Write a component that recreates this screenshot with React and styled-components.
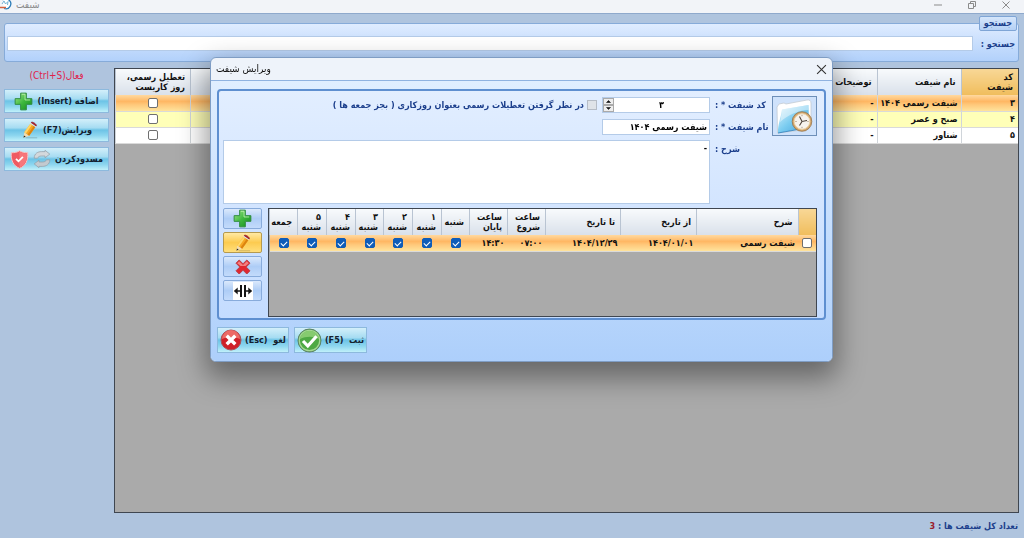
import { useState } from "react";
import styled, { createGlobalStyle } from "styled-components";

const shifts = [
  { code: "۳", name: "شیفت رسمی ۱۴۰۴", note: "-" },
  { code: "۴", name: "صبح و عصر", note: "-" },
  { code: "۵", name: "شناور", note: "-" },
];

const days = [
  ["", "شنبه"],
  ["۱", "شنبه"],
  ["۲", "شنبه"],
  ["۳", "شنبه"],
  ["۴", "شنبه"],
  ["۵", "شنبه"],
  ["", "جمعه"],
];

const PlusIcon = ({ size }) => (
  <svg width={size} height={size} viewBox="0 0 20 20" aria-hidden="true">
    <defs>
      <linearGradient id="plus" x1="0" y1="0" x2="1" y2="1">
        <stop offset="0" stopColor="#a5ea8c" />
        <stop offset="0.5" stopColor="#3fb83f" />
        <stop offset="1" stopColor="#128a1c" />
      </linearGradient>
    </defs>
    <path
      d="M7 1.2h6v5.8h5.8v6h-5.8v5.8H7v-5.800H1.200V7H7z"
      fill="url(#plus)"
      stroke="#2d8a3c"
      strokeLinejoin="round"
    />
    <path d="M8.2 2.400h3.400v6H17" fill="none" stroke="#c9f5b8" strokeWidth="0.8" />
  </svg>
);

const PencilIcon = ({ size }) => (
  <svg width={size} height={size} viewBox="0 0 20 20" aria-hidden="true">
    <path d="M5 18.6h13" stroke="#00000026" strokeWidth="1.4" />
    <path d="M2.800 18.600l.9-6 5.400 3.800z" fill="#f3dcb0" />
    <path d="M2.800 18.600l.4-2.600 2 1.300z" fill="#222" />
    <path d="M3.700 12.600L10.400 3l5.600 3.800-6.900 9.600z" fill="#f7a823" />
    <path d="M3.700 12.600L10.400 3l1.900 1.300L5.500 13.900z" fill="#ffd768" />
    <path d="M7.300 15.100L14.100 5.500 16 6.800l-6.900 9.600z" fill="#dc8410" />
    <path d="M10.400 3l.9-1.300 5.600 3.800-.9 1.300z" fill="#d9dde3" />
    <path d="M11.300 1.700c1-1.600 6.800 2 5.600 3.800z" fill="#b51f2c" stroke="#8c1420" strokeWidth="0.800" />
  </svg>
);

const SyncIcon = () => (
  <svg width="18" height="18" viewBox="0 0 18 18" aria-hidden="true">
    <path
      d="M1.200 8.200C1.200 3.500 5 1.600 8.500 1.600H12V.3l4.800 3.800L12 7.800V6H8.500C6.300 6 5.200 6.700 4.600 8.200z"
      fill="#d3d8dc"
      stroke="#8f9da8"
      strokeWidth="0.700"
    />
    <path
      d="M16.800 9.800c0 4.700-3.800 6.600-7.300 6.600H6v1.300L1.200 13.900 6 10.200V12h3.500c2.200 0 3.300-.7 3.900-2.200z"
      fill="#c3cad0"
      stroke="#8f9da8"
      strokeWidth="0.700"
    />
  </svg>
);

const ShieldIcon = () => (
  <svg width="19" height="19" viewBox="0 0 19 19" aria-hidden="true">
    <path
      d="M9.500.8c2.400 1.500 5 2 8.200 1.900.5 7.200-1.600 13-8.200 15.600C2.900 15.700.8 9.900 1.300 2.700 4.500 2.800 7.100 2.300 9.500.8z"
      fill="#ef5a62"
      stroke="#f6c3c4"
    />
    <path d="M9.500 1.500c2.400 1.400 4.700 1.900 7.500 1.800.3 6.800-1.500 11.700-7.500 14.200z" fill="#f7777b" />
    <path d="M6 8.800l2.500 2.500 4.400-4.400" fill="none" stroke="#fff" strokeWidth="1.800" />
  </svg>
);

const OkIcon = () => (
  <svg width="25" height="25" viewBox="0 0 25 25" aria-hidden="true">
    <circle cx="12.500" cy="12.500" r="11.500" fill="#4ea944" stroke="#5d7f69" strokeWidth="1" />
    <circle cx="12.500" cy="12.500" r="10.200" fill="none" stroke="#a5d795" strokeWidth="1.200" />
    <path d="M3 11a9.600 9.600 0 0 1 19 0c-5-3-13-3-19 0z" fill="#86cb70" />
    <path d="M6 13l4.800 5L19.500 8.300" fill="none" stroke="#fff" strokeWidth="3.200" />
  </svg>
);

const CancelIcon = () => (
  <svg width="22" height="22" viewBox="0 0 22 22" aria-hidden="true">
    <circle cx="11" cy="11" r="10" fill="#cf2028" stroke="#a6555c" />
    <path d="M2 10a9 9 0 0 1 18 0c-5-2.500-13-2.500-18 0z" fill="#ec6a66" />
    <path d="M6.700 6.700l8.600 8.600M15.300 6.700l-8.600 8.600" stroke="#fff" strokeWidth="3.400" />
  </svg>
);

const DeleteIcon = () => (
  <svg width="16" height="16" viewBox="0 0 16 16" aria-hidden="true">
    <path
      d="M4.200 1L8 4.800 11.800 1 15 4.200 11.200 8l3.800 3.800-3.200 3.200L8 11.200 4.200 15 1 11.800 4.800 8 1 4.200z"
      fill="#e02730"
      stroke="#b8434b"
      strokeLinejoin="round"
    />
    <path d="M4.200 2.200L8 6l3.800-3.800 2 2L10.500 7h-5L2.200 4.200z" fill="#f37f80" />
  </svg>
);

const SplitIcon = () => (
  <svg width="20" height="18" viewBox="0 0 20 18" aria-hidden="true">
    <path fill="#fff" d="M0 0h20v18H0z" />
    <path d="M8 3v12M12 3v12" stroke="#151515" strokeWidth="2" />
    <path d="M2 9h6M12 9h6" stroke="#151515" strokeWidth="1.600" />
    <path d="M4.700 5.500L.8 9l3.900 3.500zM15.300 5.500L19.200 9l-3.900 3.500z" fill="#151515" />
  </svg>
);

const FolderClockIcon = () => (
  <svg width="41" height="37" viewBox="0 0 41 37" aria-hidden="true">
    <defs>
      <linearGradient id="folder" x1="0" y1="0" x2="1" y2="1">
        <stop offset="0" stopColor="#e2f5fd" />
        <stop offset="0.5" stopColor="#7accf0" />
        <stop offset="1" stopColor="#3f9bd8" />
      </linearGradient>
    </defs>
    <path
      d="M3 9l2-3 5-1 2 1L33 2c2.500-.4 4 .6 4 3v18l-8 9-25.500 3z"
      fill="#fff"
      stroke="#c4cbd3"
      strokeWidth="0.8"
    />
    <path d="M8 11.500L34.500 7 35 25l-8 6-23 4c-.4-8 2.800-15 4-23.500z" fill="url(#folder)" />
    <path d="M8 11.500L34.500 7v5C24 12.500 14 17 6 24c1-4 1.500-8 2-12.500z" fill="#ffffff70" />
    <path d="M4 35l23-4" stroke="#2f7dbb" strokeWidth="0.8" />
    <circle cx="28" cy="23.500" r="9.800" fill="#d2a56b" stroke="#8e6a3d" strokeWidth="0.7" />
    <circle cx="28" cy="23.500" r="7.800" fill="#f6f3ee" stroke="#ecd6ac" />
    <path d="M25.500 18.500l2.500 5 5-1M28 23.500l-2.500 4" fill="none" stroke="#4a4038" strokeWidth="1.100" />
    <path d="M28 16.800v1.400M28 28.800v1.400M21.300 23.500h1.400M33.300 23.500h1.400" stroke="#a08c74" strokeWidth="0.8" />
  </svg>
);

const AppIcon = () => (
  <svg width="12" height="12" viewBox="0 0 12 12" aria-hidden="true">
    <path d="M2.500 1A5 5 0 1 1 4 9.500" fill="#fff" stroke="#2e7db8" strokeWidth="1.300" />
    <path d="M2 5l2-3 1.500 3L8 2.500 7.500 6" fill="none" stroke="#67a9cf" strokeWidth="0.900" />
    <path d="M0 8.500h6" stroke="#d5603c" strokeWidth="1.500" />
  </svg>
);

const Glyph = ({ size, d }) => (
  <svg width={size} height={size} viewBox="0 0 10 10" fill="none" stroke="currentColor" aria-hidden="true">
    <path d={d} />
  </svg>
);

const App = () => {
  const [search, setSearch] = useState("");
  const [code, setCode] = useState("۳");
  const [name, setName] = useState("شیفت رسمی ۱۴۰۴");
  const [note, setNote] = useState("-");

  return (
    <Page dir="rtl">
      <GlobalStyle />
      <TitleBar dir="ltr">
        <AppIcon />
        <WindowTitle>شیفت</WindowTitle>
        <WindowButton aria-label="Minimize">
          <Glyph size={10} d="M1 5h8" />
        </WindowButton>
        <WindowButton aria-label="Restore">
          <Glyph size={10} d="M1.500 3.500h5v5h-5zM3.500 3.500v-2h5v5h-2" />
        </WindowButton>
        <WindowButton aria-label="Close window">
          <Glyph size={10} d="M1.500 1.500l7 7M8.500 1.500l-7 7" />
        </WindowButton>
      </TitleBar>

      <SearchBox>
        <legend>جستجو</legend>
        <SearchRow>
          <label htmlFor="search">جستجو :</label>
          <TextInput id="search" value={search} onChange={(e) => setSearch(e.target.value)} />
        </SearchRow>
      </SearchBox>

      <Main>
        <GridFrame>
          <Table>
            <colgroup>
              <Col $w={57} />
              <Col $w={84} />
              <Col $w={50} />
              <col />
              <Col $w={75} />
            </colgroup>
            <thead>
              <tr>
                <Th $active>
                  کد
                  <br />
                  شیفت
                </Th>
                <Th>نام شیفت</Th>
                <Th>توضیحات</Th>
                <Th />
                <Th>
                  تعطیل رسمی،
                  <br />
                  روز کاریست
                </Th>
              </tr>
            </thead>
            <tbody>
              {shifts.map((shift, i) => (
                <Row key={shift.code} $tone={["selected", "alt", "plain"][i]}>
                  <td>{shift.code}</td>
                  <td>{shift.name}</td>
                  <td>{shift.note}</td>
                  <td />
                  <CheckCell>
                    <Check type="checkbox" aria-label={shift.name} />
                  </CheckCell>
                </Row>
              ))}
            </tbody>
          </Table>
        </GridFrame>
        <Sidebar>
          <Status>فعال(Ctrl+S)</Status>
          <ActionButton>
            اضافه (Insert)
            <PlusIcon size={19} />
          </ActionButton>
          <ActionButton>
            ویرایش(F7)
            <PencilIcon size={18} />
          </ActionButton>
          <ActionButton>
            مسدودکردن
            <SyncIcon />
            <ShieldIcon />
          </ActionButton>
        </Sidebar>
      </Main>

      <Footer>
        تعداد کل شیفت ها : <Count>3</Count>
      </Footer>

      <Overlay>
        <Dialog role="dialog" aria-labelledby="dialog-title">
          <DialogBar>
            <CloseButton aria-label="Close">
              <Glyph size={11} d="M1 1l8 8M9 1l-8 8" />
            </CloseButton>
            <DialogTitle id="dialog-title">ویرایش شیفت</DialogTitle>
          </DialogBar>
          <DialogBody>
            <Panel>
              <Form>
                <IconFrame>
                  <FolderClockIcon />
                </IconFrame>
                <FieldLabel htmlFor="code">کد شیفت * :</FieldLabel>
                <FieldRow>
                  <Spinner>
                    <input id="code" value={code} onChange={(e) => setCode(e.target.value)} />
                    <SpinButtons>
                      <button aria-label="Increase">
                        <Glyph size={5} d="M1 7l4-4 4 4z" />
                      </button>
                      <button aria-label="Decrease">
                        <Glyph size={5} d="M1 3l4 4 4-4z" />
                      </button>
                    </SpinButtons>
                  </Spinner>
                  <HolidayLabel>
                    <FlatCheck type="checkbox" disabled />
                    در نظر گرفتن تعطیلات رسمی بعنوان روزکاری ( بجز جمعه ها )
                  </HolidayLabel>
                </FieldRow>
                <FieldLabel htmlFor="name">نام شیفت * :</FieldLabel>
                <FieldRow>
                  <NameInput id="name" value={name} onChange={(e) => setName(e.target.value)} />
                </FieldRow>
                <FieldLabel htmlFor="note">شرح :</FieldLabel>
                <Note id="note" value={note} onChange={(e) => setNote(e.target.value)} />
              </Form>
              <Details>
                <GridFrame>
                  <Table>
                    <colgroup>
                      <Col $w={18} />
                      <col />
                      <Col $w={76} />
                      <Col $w={75} />
                      <Col $w={38} />
                      <Col $w={38} />
                      {days.map((day, i) => (
                        <Col key={i} $w={i % 3 ? 29 : 28} />
                      ))}
                    </colgroup>
                    <thead>
                      <tr>
                        <Th $active />
                        <Th>شرح</Th>
                        <Th>از تاریخ</Th>
                        <Th>تا تاریخ</Th>
                        <Th>
                          ساعت
                          <br />
                          شروع
                        </Th>
                        <Th>
                          ساعت
                          <br />
                          پایان
                        </Th>
                        {days.map(([num, label], i) => (
                          <Th key={i}>
                            {num}
                            {num && <br />}
                            {label}
                          </Th>
                        ))}
                      </tr>
                    </thead>
                    <tbody>
                      <Row $tone="selected" $merged>
                        <CheckCell>
                          <Check type="checkbox" aria-label="شیفت رسمی" />
                        </CheckCell>
                        <td>شیفت رسمی</td>
                        <td>۱۴۰۴/۰۱/۰۱</td>
                        <td>۱۴۰۴/۱۲/۲۹</td>
                        <td>۰۷:۰۰</td>
                        <td>۱۴:۳۰</td>
                        {days.map(([num, label], i) => (
                          <CheckCell key={i}>
                            <Check type="checkbox" defaultChecked aria-label={`${num} ${label}`} />
                          </CheckCell>
                        ))}
                      </Row>
                    </tbody>
                  </Table>
                </GridFrame>
                <Tools>
                  <ToolButton aria-label="Add">
                    <PlusIcon size={19} />
                  </ToolButton>
                  <ToolButton $active aria-label="Edit">
                    <PencilIcon size={18} />
                  </ToolButton>
                  <ToolButton aria-label="Delete">
                    <DeleteIcon />
                  </ToolButton>
                  <ToolButton aria-label="Split">
                    <SplitIcon />
                  </ToolButton>
                </Tools>
              </Details>
            </Panel>
            <DialogActions>
              <DialogButton>
                ثبت &nbsp;(F5)
                <OkIcon />
              </DialogButton>
              <DialogButton>
                لغو &nbsp;(Esc)
                <CancelIcon />
              </DialogButton>
            </DialogActions>
          </DialogBody>
        </Dialog>
      </Overlay>
    </Page>
  );
};

const GlobalStyle = createGlobalStyle`
  * {
    box-sizing: border-box;
  }
  body {
    margin: 0;
  }
  body, button, input, textarea {
    font-family: "DejaVu Sans Condensed", "DejaVu Sans", sans-serif;
    font-size: 9px;
    font-weight: bold;
    line-height: 10px;
  }
  button {
    padding: 0;
    cursor: pointer;
  }
`;
const Page = styled.div`
  display: flex;
  flex-direction: column;
  min-height: 100vh;
  background: #afc4de;
  color: #111;
`;
const TitleBar = styled.header`
  display: flex;
  align-items: center;
  height: 14px;
  padding-right: 7px;
  padding-bottom: 4px;
  background: #f2f4f8;
  border-bottom: 1px solid #8fa9cc;
  color: #8b8b8b;
`;
const WindowTitle = styled.h1`
  flex: 1;
  margin: 0 0 0 4px;
  font-size: 10px;
  font-weight: normal;
`;
const WindowButton = styled.button`
  display: flex;
  justify-content: center;
  width: 22px;
  margin-left: 12px;
  border: 0;
  background: none;
  color: #8b8b8b;
`;
const SearchBox = styled.fieldset`
  margin: 2px 5px 0 4px;
  padding: 5px 1px 10px 2px;
  border: 1px solid #86abd9;
  border-radius: 3px;
  background: linear-gradient(#dfecff, #b2d1fb);
  color: #1c3f8c;
  legend {
    height: 15px;
    padding: 1px 4px;
    border: 1px solid #7fa5d6;
    border-radius: 2px;
    background: linear-gradient(#d6e6fb, #b4d0f5);
  }
`;
const SearchRow = styled.div`
  display: flex;
  align-items: center;
  gap: 8px;
  padding-right: 2px;
`;
const TextInput = styled.input`
  flex: 1;
  min-width: 0;
  height: 15px;
  padding: 0 2px;
  border: 1px solid #b4cbe8;
  background: #fff;
  outline: none;
`;
const Main = styled.main`
  display: flex;
  flex: 1;
  gap: 5px;
  padding: 6px 5px 0 4px;
`;
const GridFrame = styled.div`
  flex: 1;
  min-width: 0;
  border: 1px solid #3f4650;
  background: #aaa;
`;
const Table = styled.table`
  width: 100%;
  table-layout: fixed;
  border-collapse: collapse;
  td {
    height: 16px;
    padding: 0 3px;
    white-space: nowrap;
  }
`;
const Col = styled.col`
  width: ${(props) => props.$w}px;
`;
const Th = styled.th`
  height: 26px;
  padding: 0 5px 0 0;
  border-left: 1px solid #b9c4d2;
  background: ${(props) =>
    props.$active ? "linear-gradient(#f8d796, #f0bd5d)" : "linear-gradient(#f8fafc, #d9e0ea)"};
  text-align: right;
  white-space: nowrap;
`;
const tones = {
  selected: "linear-gradient(#ffd9a0, #ffb763 40%, #ffc87a 60%, #ffe39c)",
  alt: "#ffffb8",
  plain: "#fff",
};
const Row = styled.tr`
  background: ${(props) => tones[props.$tone]};
  td {
    border-left: ${(props) => (props.$merged ? "0" : "1px solid #d0d5da")};
    border-bottom: 1px solid #dadada;
  }
`;
const CheckCell = styled.td`
  && {
    padding: 0;
    text-align: center;
    line-height: 0;
  }
`;
const Check = styled.input`
  appearance: none;
  width: 10px;
  height: 10px;
  margin: 0;
  border: 1px solid #6f6f6f;
  border-radius: 2px;
  background: #fff;
  vertical-align: middle;
  &:checked {
    border-color: #0f5cb8;
    background: #0f5cb8;
  }
  &:checked::before {
    content: "";
    display: block;
    width: 5px;
    height: 3px;
    margin: 2px 1px;
    border: solid #fff;
    border-width: 0 0 1px 1px;
    transform: rotate(-45deg);
  }
`;
const FlatCheck = styled(Check)`
  border-color: #b5bcc6;
  border-radius: 0;
  background: #dfe3e8;
`;
const Sidebar = styled.aside`
  display: flex;
  flex-direction: column;
  gap: 5px;
  width: 105px;
`;
const Status = styled.div`
  height: 16px;
  padding-top: 3px;
  color: #e0224c;
  font-size: 10px;
  font-weight: normal;
  text-align: center;
`;
const ActionButton = styled.button`
  display: flex;
  align-items: center;
  justify-content: center;
  gap: 4px;
  height: 24px;
  padding: 0 4px;
  border: 1px solid #8db9dd;
  background: linear-gradient(#d3effa, #a6dcf2 40%, #6cc3e6 50%, #8dd6ef 75%, #c0f0fa);
  color: #14202e;
  white-space: nowrap;
`;
const DialogButton = styled(ActionButton)`
  gap: 3px;
  height: 26px;
  padding: 0 2px;
`;
const Footer = styled.footer`
  height: 25px;
  padding: 8px 6px 0;
  color: #1c3f8c;
`;
const Count = styled.span`
  color: #9b1c2c;
`;
const Overlay = styled.div`
  position: fixed;
  inset: 0;
  display: flex;
  align-items: flex-start;
  padding: 57px 191px 0 210px;
`;
const Dialog = styled.section`
  flex: 1;
  min-width: 0;
  overflow: hidden;
  border: 1px solid #7f9dc4;
  border-radius: 6px;
  background: #eef3fa;
  box-shadow: 0 12px 28px 4px rgba(0, 0, 0, 0.4);
`;
const DialogBar = styled.div`
  display: flex;
  align-items: center;
  justify-content: space-between;
  height: 23px;
  padding: 0 5px;
  border-bottom: 1px solid #8fb2e0;
`;
const DialogTitle = styled.h2`
  margin: 0;
  font-size: 10px;
  font-weight: normal;
`;
const CloseButton = styled.button`
  display: flex;
  border: 0;
  background: none;
  color: #333;
`;
const DialogBody = styled.div`
  padding: 8px 6px;
  background: linear-gradient(#e0eeff, #adcffb);
`;
const Panel = styled.div`
  padding: 5px 7px 1px 4px;
  border: 2px solid #5e8fd0;
  border-radius: 4px;
  background: linear-gradient(#e2eeff, #c4dcff);
`;
const Form = styled.div`
  display: grid;
  grid-template-columns: 45px 62px 1fr;
  grid-template-rows: 22px 22px 64px;
  color: #1c3f8c;
`;
const IconFrame = styled.div`
  display: flex;
  grid-row: 1 / 4;
  align-items: center;
  justify-content: center;
  height: 40px;
  border: 1px solid #6d8fb8;
  background: #cfe2fb;
`;
const FieldLabel = styled.label`
  padding: 4px 0 0 5px;
  text-align: left;
  white-space: nowrap;
`;
const FieldRow = styled.div`
  display: flex;
  align-items: flex-start;
  gap: 5px;
  padding-top: 1px;
`;
const Spinner = styled.div`
  display: flex;
  width: 108px;
  height: 16px;
  border: 1px solid #b4cbe8;
  background: #fff;
  input {
    flex: 1;
    min-width: 0;
    padding: 0;
    border: 0;
    outline: none;
    text-align: center;
  }
`;
const SpinButtons = styled.div`
  display: flex;
  flex-direction: column;
  width: 11px;
  button {
    display: flex;
    flex: 1;
    align-items: center;
    justify-content: center;
    border: 1px solid #aaa;
    background: #eee;
  }
  path {
    fill: #111;
  }
`;
const HolidayLabel = styled.label`
  display: flex;
  align-items: center;
  gap: 3px;
  height: 16px;
  white-space: nowrap;
`;
const NameInput = styled(TextInput)`
  flex: none;
  width: 108px;
  height: 16px;
`;
const Note = styled.textarea`
  padding: 2px;
  border: 1px solid #b4cbe8;
  outline: none;
  resize: none;
`;
const Details = styled.div`
  display: flex;
  gap: 6px;
  height: 109px;
  margin-top: 4px;
`;
const Tools = styled.div`
  display: flex;
  flex-direction: column;
  gap: 3px;
  width: 39px;
`;
const ToolButton = styled.button`
  display: flex;
  align-items: center;
  justify-content: center;
  height: 21px;
  border: 1px solid ${(props) => (props.$active ? "#b59a4f" : "#88abdb")};
  border-radius: 2px;
  background: ${(props) =>
    props.$active
      ? "linear-gradient(#ffe9a4, #fccb50 50%, #ffdf7c)"
      : "linear-gradient(#dbe9fc, #aecdf6 50%, #c3dbfb)"};
`;
const DialogActions = styled.div`
  display: flex;
  justify-content: flex-end;
  gap: 5px;
  margin-top: 7px;
`;

export default App;
